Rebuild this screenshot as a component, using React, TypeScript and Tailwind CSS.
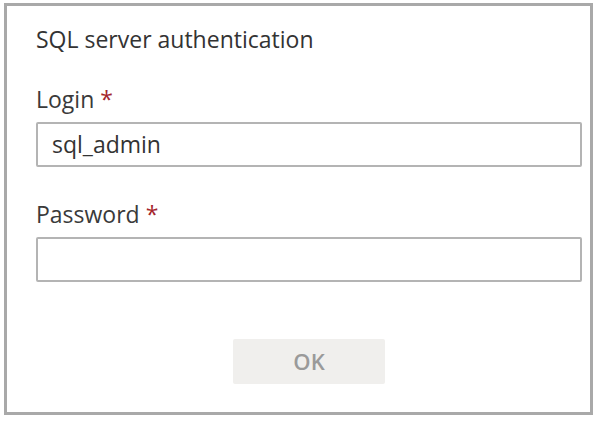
export default function App() {
  return (
    <div className="w-[596px] h-[424px] bg-white pt-[3px] pl-[4px] font-['Open_Sans',sans-serif]">
      <div className="w-[589px] h-[412px] border-[3px] border-[#a9a9a9] bg-white flex flex-col pl-[29px] pr-[8px]">
        <h1 className="mt-[19px] text-[23px] leading-[28px] text-[#333]">SQL server authentication</h1>

        {/* Login */}
        <label className="mt-[32px] text-[23px] leading-[28px] text-[#3a3a3a]">
          Login <span className="text-[#a4262c]">*</span>
        </label>
        <div className="mt-[9px] h-[45px] border-2 border-[#b4b4b4] rounded-[2px] flex items-center px-[14px] text-[23px] text-[#333]">
          sql_admin
        </div>

        {/* Password */}
        <label className="mt-[33px] text-[23px] leading-[28px] text-[#3a3a3a]">
          Password <span className="text-[#a4262c]">*</span>
        </label>
        <div className="mt-[9px] h-[45px] border-2 border-[#b4b4b4] rounded-[2px]" />

        <div className="flex justify-center mt-[57px]">
          <button className="w-[152px] h-[45px] bg-[#f0efed] rounded-[2px] text-[22px] font-semibold text-[#9a9a9a]">
            OK
          </button>
        </div>
      </div>
    </div>
  );
}
